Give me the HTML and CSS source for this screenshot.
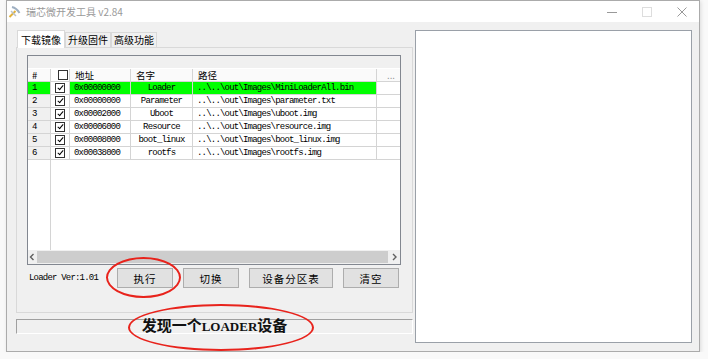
FILE: index.html
```html
<!DOCTYPE html>
<html lang="zh-CN">
<head>
  <meta charset="UTF-8" />
  <title>瑞芯微开发工具 v2.84</title>
  <link rel="stylesheet" href="styles.css">
</head>
<body>

  <div class="window">
    <div class="titlebar">
      <svg class="app-icon" width="13" height="13" viewBox="0 0 13 13">
        <path d="M4 2 Q8.5 3 11.5 8" stroke="#9fb0c2" stroke-width="2" fill="none" />
        <path d="M1.5 12 L7.5 6" stroke="#e2b23a" stroke-width="2" />
        <path d="M3 6 L8 11" stroke="#b8c2cc" stroke-width="1.5" />
      </svg>
      <span class="title">瑞芯微开发工具 v2.84</span>
      <div class="controls">
        <div class="ctl">
          <svg width="10" height="10" viewBox="0 0 10 10"><path d="M0 5.5 H10" stroke="#999" /></svg>
        </div>
        <div class="ctl">
          <svg width="10" height="10" viewBox="0 0 10 10"><rect x="0.5" y="0.5" width="9" height="9" stroke="#ddd" fill="none" /></svg>
        </div>
        <div class="ctl">
          <svg width="10" height="10" viewBox="0 0 10 10"><path d="M0.5 0.5 L9.5 9.5 M9.5 0.5 L0.5 9.5" stroke="#999" /></svg>
        </div>
      </div>
    </div>

    <div class="client">
      <div class="left">
        <div class="tabs">
          <div class="tab active">下载镜像</div>
          <div class="tab">升级固件</div>
          <div class="tab">高级功能</div>
        </div>

        <div class="tab-panel">
          <div class="listbox">
            <div class="list-top"></div>
            <div class="row head">
              <span class="c-idx">#</span>
              <span class="c-cb"><i class="box"></i></span>
              <span>地址</span>
              <span>名字</span>
              <span>路径</span>
              <span class="c-more">...</span>
            </div>
            <div class="row sel">
              <span class="c-idx">1</span>
              <span class="c-cb"><i class="box checked"></i></span>
              <span>0x00000000</span>
              <span class="c-name">Loader</span>
              <span>..\..\out\Images\MiniLoaderAll.bin</span>
              <span class="c-more"></span>
            </div>
            <div class="row">
              <span class="c-idx">2</span>
              <span class="c-cb"><i class="box checked"></i></span>
              <span>0x00000000</span>
              <span class="c-name">Parameter</span>
              <span>..\..\out\Images\parameter.txt</span>
              <span class="c-more"></span>
            </div>
            <div class="row">
              <span class="c-idx">3</span>
              <span class="c-cb"><i class="box checked"></i></span>
              <span>0x00002000</span>
              <span class="c-name">Uboot</span>
              <span>..\..\out\Images\uboot.img</span>
              <span class="c-more"></span>
            </div>
            <div class="row">
              <span class="c-idx">4</span>
              <span class="c-cb"><i class="box checked"></i></span>
              <span>0x00006000</span>
              <span class="c-name">Resource</span>
              <span>..\..\out\Images\resource.img</span>
              <span class="c-more"></span>
            </div>
            <div class="row">
              <span class="c-idx">5</span>
              <span class="c-cb"><i class="box checked"></i></span>
              <span>0x00008000</span>
              <span class="c-name">boot_linux</span>
              <span>..\..\out\Images\boot_linux.img</span>
              <span class="c-more"></span>
            </div>
            <div class="row">
              <span class="c-idx">6</span>
              <span class="c-cb"><i class="box checked"></i></span>
              <span>0x00038000</span>
              <span class="c-name">rootfs</span>
              <span>..\..\out\Images\rootfs.img</span>
              <span class="c-more"></span>
            </div>
            <div class="list-empty"><div class="empty-idx"></div></div>
            <div class="hscroll">
              <svg class="arrow" width="9" height="14" viewBox="0 0 9 14"><path d="M5.5 4 L2.5 7 L5.5 10" stroke="#606060" stroke-width="1.4" fill="none" /></svg>
              <div class="thumb"></div>
              <svg class="arrow arrow-r" width="12" height="14" viewBox="0 0 12 14"><path d="M5 4 L8 7 L5 10" stroke="#606060" stroke-width="1.4" fill="none" /></svg>
            </div>
          </div>

          <div class="actions">
            <span class="loader-ver">Loader Ver:1.01</span>
            <button>执行</button>
            <button>切换</button>
            <button class="btn-wide">设备分区表</button>
            <button>清空</button>
          </div>
        </div>

        <div class="statusbar">发现一个<span class="latin">LOADER</span>设备</div>
      </div>

      <div class="log-panel"></div>
    </div>

    <!-- hand-drawn red marks -->
    <div class="mark mark-run"></div>
    <div class="mark mark-status"></div>
  </div>

</body>
</html>
```

FILE: styles.css
```css
body {
  margin: 0;
  background: #f9f9f9;
  font-family: "Noto Sans CJK SC", sans-serif;
}
.window {
  position: relative;
  margin-left: 6px;
  width: 694px;
  height: 352px;
  box-sizing: border-box;
  border: 1px solid #ababab;
  background: #f0f0f0;
  box-shadow: 1px 1px 4px rgba(0,0,0,0.12);
}
.titlebar {
  height: 21px;
  background: #fff;
  display: flex;
  align-items: center;
}
.app-icon {
  margin-left: 1px;
}
.title {
  margin-left: 5px;
  font-size: 10px;
  color: #999;
}
.controls {
  margin-left: auto;
  display: flex;
  height: 21px;
}
.ctl {
  width: 35px;
  display: flex;
  align-items: center;
  justify-content: center;
}
.client {
  display: flex;
  gap: 2px;
  padding: 8px 0 0 9px;
}
.left {
  width: 397px;
}
.tabs {
  display: flex;
  align-items: flex-end;
  height: 17px;
  padding-left: 1px;
}
.tab {
  height: 15px;
  box-sizing: border-box;
  padding: 0 2px;
  border: 1px solid #d9d9d9;
  border-bottom: none;
  background: #f0f0f0;
  font-size: 10px;
  line-height: 14px;
  color: #000;
}
.tab.active {
  height: 18px;
  padding: 0 3px;
  margin-bottom: -1px;
  background: #fff;
  line-height: 17px;
  position: relative;
  z-index: 1;
}
.tab-panel {
  height: 266px;
  box-sizing: border-box;
  border: 1px solid #d9d9d9;
  background: #f0f0f0;
  padding: 7px 0 0 10px;
}
.listbox {
  width: 374px;
  height: 210px;
  box-sizing: border-box;
  border: 1px solid #828790;
  background: #fff;
  display: flex;
  flex-direction: column;
}
.list-top {
  height: 12px;
  flex: none;
  background: #f0f0f0;
  border-bottom: 1px solid #fff;
}
.row {
  display: grid;
  grid-template-columns: 23px 19px 61px 62px 184px 23px;
  height: 13px;
  flex: none;
  box-sizing: border-box;
  border-bottom: 1px solid #d4d4d4;
}
.row > span {
  border-right: 1px solid #d4d4d4;
  padding-left: 4px;
  overflow: hidden;
  white-space: nowrap;
  font-family: "Liberation Mono", monospace;
  font-size: 9px;
  letter-spacing: -0.8px;
  line-height: 12px;
  color: #000;
}
.row.head {
  background: #fafafa;
}
.row.head > span {
  font-family: "Noto Sans CJK SC", sans-serif;
  font-size: 9.5px;
  letter-spacing: 0;
  padding-left: 5px;
}
.row.head > .c-idx {
  padding-left: 4px;
}
.row > .c-more {
  padding: 0;
  text-align: center;
  color: #888;
  border-right: none;
}
.row > .c-idx {
  background: #f0f0f0;
}
.row.head > .c-idx {
  background: #fafafa;
}
.row > .c-name {
  text-align: center;
  padding: 0;
}
.row > .c-cb {
  padding: 0;
  display: flex;
  align-items: center;
  justify-content: center;
  background: #fff;
}
.row.sel > span {
  background: #00ff00;
}
.row.sel > .c-cb,
.row.sel > .c-more {
  background: #fff;
}
.box {
  display: block;
  width: 8px;
  height: 8px;
  border: 1px solid #333;
  background: #fff;
  position: relative;
}
.box.checked::after {
  content: "";
  position: absolute;
  left: 2.5px;
  top: 0;
  width: 2px;
  height: 5px;
  border: solid #000;
  border-width: 0 1.5px 1.5px 0;
  transform: rotate(40deg);
}
.list-empty {
  flex: 1;
}
.empty-idx {
  width: 22px;
  height: 100%;
  border-right: 1px solid #d4d4d4;
}
.hscroll {
  height: 14px;
  flex: none;
  display: flex;
  align-items: center;
  background: #f0f0f0;
}
.thumb {
  flex: 1;
  height: 12px;
  background: #cdcdcd;
}
.actions {
  display: flex;
  align-items: center;
  gap: 10px;
  margin-top: 3px;
  padding-left: 2px;
}
.loader-ver {
  width: 78px;
  font-family: "Liberation Mono", monospace;
  font-size: 9px;
  letter-spacing: -0.8px;
  color: #000;
}
.actions button {
  width: 56px;
  height: 20px;
  padding: 0;
  border: 1px solid #adadad;
  background: #e1e1e1;
  font-family: "Noto Sans CJK SC", sans-serif;
  font-size: 10.5px;
  letter-spacing: 1px;
  color: #000;
}
.actions .btn-wide {
  width: 84px;
}
.statusbar {
  margin-top: 6px;
  height: 15px;
  box-sizing: border-box;
  border-top: 1px solid #a0a0a0;
  border-left: 1px solid #a0a0a0;
  border-right: 1px solid #fff;
  border-bottom: 1px solid #fff;
  text-align: center;
  font-family: "Liberation Serif", "Noto Sans CJK SC", serif;
  font-weight: bold;
  font-size: 15px;
  line-height: 13px;
  color: #111;
}
.statusbar .latin {
  font-size: 13px;
}
.log-panel {
  width: 277px;
  height: 313px;
  box-sizing: border-box;
  border: 1px solid #9aa0a8;
  background: #fff;
}
.mark {
  position: absolute;
  box-sizing: border-box;
  border: 2px solid #e8231c;
  border-radius: 50%;
}
.mark-run {
  left: 99px;
  top: 256px;
  width: 75px;
  height: 41px;
}
.mark-status {
  left: 121px;
  top: 303px;
  width: 186px;
  height: 47px;
}
```
